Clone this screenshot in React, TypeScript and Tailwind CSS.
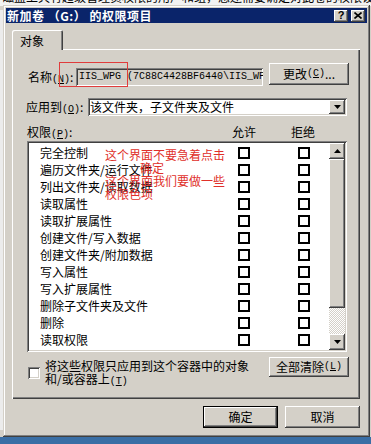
import React from "react";

const raised =
  "bg-[#d4d0c8] shadow-[inset_-1px_-1px_#404040,inset_1px_1px_#ffffff,inset_-2px_-2px_#808080,inset_2px_2px_#d4d0c8]";
const sunken =
  "shadow-[inset_1px_1px_#808080,inset_-1px_-1px_#ffffff,inset_2px_2px_#404040,inset_-2px_-2px_#d4d0c8]";

const perms = [
  "完全控制",
  "遍历文件夹/运行文件",
  "列出文件夹/读取数据",
  "读取属性",
  "读取扩展属性",
  "创建文件/写入数据",
  "创建文件夹/附加数据",
  "写入属性",
  "写入扩展属性",
  "删除子文件夹及文件",
  "删除",
  "读取权限",
];

// (N) style accelerator, half width like SimSun
const Acc = ({ k }: { k: string }) => (
  <span className="font-['Liberation_Mono',monospace] text-[10px]">
    (<u>{k}</u>)
  </span>
);

const Arrow = ({ up }: { up?: boolean }) => (
  <svg width="7" height="4" viewBox="0 0 7 4">
    {up ? <path d="M3.5 0L7 4H0z" fill="#000" /> : <path d="M0 0h7L3.5 4z" fill="#000" />}
  </svg>
);

const Box = () => <div className="w-[12px] h-[12px] border-2 border-black bg-white" />;

export default function App() {
  return (
    <div className="relative w-[371px] h-[444px] overflow-hidden bg-[#3a6ea5] font-['Noto_Sans_CJK_SC','Noto_Sans',sans-serif] text-[12px] text-black">
      {/* window behind the dialog */}
      <div className="absolute left-0 top-0 w-[371px] h-[437px] bg-[#d4d0c8]">
        <div className="h-[6px] overflow-hidden bg-[#f2f2f2]">
          <div className="-mt-[10px] pl-[2px] whitespace-nowrap leading-[14px]">
            磁盘上具有超级管理员权限的用户和组，您还需要确定对此卷的权限设置，以便选择用户和组
          </div>
        </div>
        <div className="ml-0 mt-[4px] w-[3px] h-[420px] bg-[#ececec]" />
      </div>

      {/* dialog */}
      <div className="absolute left-[3px] top-[5px] w-[367px] h-[432px] p-[3px] bg-[#d4d0c8] shadow-[inset_-1px_-1px_#404040,inset_1px_1px_#d4d0c8,inset_-2px_-2px_#808080,inset_2px_2px_#ffffff]">
        <div className="flex items-center h-[15px] bg-[#0a246a] pl-[1px] pr-[2px]">
          <span className="text-white font-bold leading-none whitespace-nowrap tracking-[0.5px]">新加卷 （G:） 的权限项目</span>
          <div className="ml-auto flex gap-[3px]">
            <div className={`${raised} w-[14px] h-[12px] flex items-center justify-center text-[11px] font-bold leading-none font-['Liberation_Sans',sans-serif]`}>?</div>
            <div className={`${raised} w-[14px] h-[12px] flex items-center justify-center`}>
              <svg width="8" height="7" viewBox="0 0 8 7">
                <path d="M0.5 0.5L7.5 6.5M7.5 0.5L0.5 6.5" stroke="#000" strokeWidth="1.6" />
              </svg>
            </div>
          </div>
        </div>

        <div className="ml-[6px] mt-[7px] relative z-10 -mb-[1px] w-[51px] h-[20px] bg-[#d4d0c8] rounded-t-[2px] shadow-[inset_1px_1px_#ffffff,inset_-1px_0_#404040,inset_-2px_0_#808080] pl-[8px] pt-[4px] leading-[14px]">
          对象
        </div>

        <div className="relative ml-[6px] w-[348px] h-[350px] bg-[#d4d0c8] shadow-[inset_1px_1px_#ffffff,inset_-1px_-1px_#404040,inset_-2px_-2px_#808080] pl-[15px] pr-[11px] pt-[14px]">
          <div className="flex items-start h-[23px]">
            <div className="mt-[5px] ml-[1px] w-[48px] leading-[18px] whitespace-nowrap">
              名称<Acc k="N" />:
            </div>
            <div className={`${sunken} mt-[5px] w-[187px] h-[18px] bg-[#d4d0c8] pl-[3px] overflow-hidden whitespace-nowrap font-['Liberation_Mono',monospace] text-[10px] leading-[18px]`}>
              IIS_WPG (7C88C4428BF6440\IIS_WPG)
            </div>
            <div className={`${raised} ml-[6px] w-[80px] h-[22px] flex items-center justify-center leading-none whitespace-nowrap`}>
              更改<Acc k="C" />...
            </div>
          </div>

          <div className="mt-[12px] flex items-center h-[18px]">
            <div className="-ml-[1px] w-[62px] whitespace-nowrap">
              应用到<Acc k="O" />:
            </div>
            <div className={`${sunken} w-[259px] h-[18px] bg-white flex`}>
              <div className="flex-1 pl-[2px] leading-[18px] whitespace-nowrap">该文件夹，子文件夹及文件</div>
              <div className={`${raised} mt-[2px] mr-[2px] w-[16px] h-[14px] flex items-center justify-center`}>
                <Arrow />
              </div>
            </div>
          </div>

          <div className="mt-[9px] flex h-[14px] leading-[14px]">
            <div className="w-[205px]">
              权限<Acc k="P" />:
            </div>
            <div className="w-[59px]">允许</div>
            <div>拒绝</div>
          </div>

          <div className={`${sunken} mt-[2px] w-[320px] h-[211px] bg-white flex p-[2px]`}>
            <div className="flex-1 pt-[1px]">
              {perms.map((p) => (
                <div key={p} className="flex items-center h-[17px]">
                  <div className="w-[209px] pl-[11px] leading-[17px] whitespace-nowrap">{p}</div>
                  <Box />
                  <div className="ml-[48px]">
                    <Box />
                  </div>
                </div>
              ))}
            </div>
            <div className="w-[16px] flex flex-col">
              <div className={`${raised} h-[16px] flex items-center justify-center`}>
                <Arrow up />
              </div>
              <div className={`${raised} h-[149px]`} />
              <div className="flex-1 bg-[repeating-conic-gradient(#ffffff_0%_25%,#d4d0c8_0%_50%)] bg-size-[2px_2px]" />
              <div className={`${raised} h-[16px] flex items-center justify-center`}>
                <Arrow />
              </div>
            </div>
          </div>

          <div className="mt-[5px] flex items-start">
            <div className={`${sunken} mt-[10px] ml-[1px] w-[12px] h-[12px] bg-white`} />
            <div className="ml-[5px] mt-[2px] leading-[13px] whitespace-nowrap">
              <div>将这些权限只应用到这个容器中的对象</div>
              <div>
                和/或容器上<Acc k="T" />
              </div>
            </div>
            <div className={`${raised} ml-auto w-[80px] h-[20px] flex items-center justify-center leading-none whitespace-nowrap`}>
              全部清除<Acc k="L" />
            </div>
          </div>

          {/* annotation overlay */}
          <div className="absolute left-[47px] top-[13px] w-[69px] h-[25px] border border-[#e03c3c]" />
          <div className="absolute left-[93px] top-[99px] text-[#e0302a] leading-[13px] whitespace-nowrap">
            <div>这个界面不要急着点击</div>
            <div className="pl-[35px]">确定</div>
            <div>这个界面我们要做一些</div>
            <div>权限色项</div>
          </div>
        </div>

        <div className="ml-[6px] w-[348px] mt-[7px] flex justify-end gap-[7px]">
          <div className="w-[75px] h-[22px] border border-black">
            <div className={`${raised} w-full h-full flex items-center justify-center leading-none`}>确定</div>
          </div>
          <div className={`${raised} w-[75px] h-[22px] flex items-center justify-center leading-none`}>取消</div>
        </div>
      </div>
    </div>
  );
}
